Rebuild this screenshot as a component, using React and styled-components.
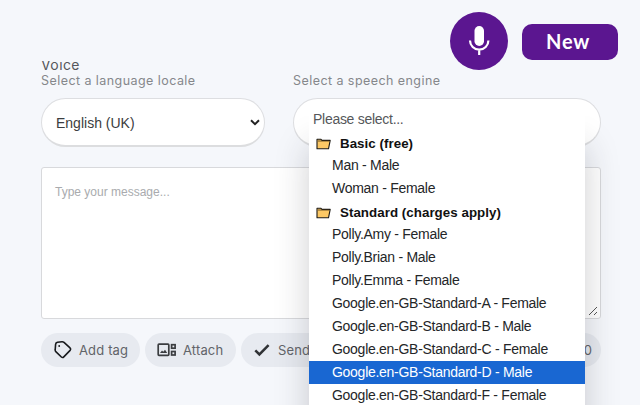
import React from "react";
import styled, { createGlobalStyle } from "styled-components";

const Global = createGlobalStyle`
  * { box-sizing: border-box; }
  html, body { margin: 0; background: #f5f7fb; overflow: hidden; }
`;

const Page = styled.main`
  position: relative;
  width: 640px;
  height: 405px;
  overflow: hidden;
  background: #f5f7fb;
  font-family: Inter, "Open Sans", sans-serif;
`;

const Header = styled.header`
  display: flex;
  justify-content: flex-end;
  align-items: center;
  gap: 14px;
  height: 61px;
  padding: 21px 22px 0 0;
`;

const MicButton = styled.button`
  display: grid;
  place-items: center;
  flex: none;
  width: 58px;
  height: 58px;
  padding: 0;
  border: 0;
  border-radius: 50%;
  background: #5b1690;
`;

const NewButton = styled.button`
  width: 96px;
  height: 36px;
  padding: 0 4px 2px 0;
  margin-top: 2px;
  border: 0;
  border-radius: 10px;
  background: #5b1690;
  color: #fff;
  font: 700 20px/34px Lato, sans-serif;
  letter-spacing: 0.7px;
`;

const Content = styled.section`
  width: 560px;
  margin-left: 41px;
`;

const TitleClip = styled.div`
  display: flex;
  align-items: flex-end;
  height: 11px;
  overflow: hidden;
`;

const Title = styled.h2`
  margin: 0;
  color: #55575b;
  font-size: 14px;
  font-weight: 400;
  line-height: 14px;
  letter-spacing: 0.4px;
`;

const Fields = styled.div`
  display: grid;
  grid-template-columns: 224px 308px;
  justify-content: space-between;
`;

const Label = styled.div`
  height: 26px;
  padding-top: 1px;
  color: #85878b;
  font-size: 12.5px;
  line-height: 16px;
  letter-spacing: 0.44px;
  white-space: nowrap;
`;

const SelectBox = styled.div`
  display: flex;
  align-items: center;
  justify-content: space-between;
  height: 49px;
  padding: 1px 4px 0 14px;
  border: 1px solid #dddee1;
  border-bottom: 2px solid #dcdddf;
  border-radius: 25px;
  background: #fff;
  color: #3b3d40;
  font: 14px "Liberation Sans", Arial, sans-serif;
`;

const Message = styled.div`
  display: flex;
  justify-content: space-between;
  height: 152px;
  margin-top: 20px;
  padding: 17px 1px 1px 13px;
  border: 1px solid #d8d9dc;
  border-radius: 3px;
  background: #fff;
  color: #a9abae;
  font: 12px/15px "Liberation Sans", Arial, sans-serif;
`;

const Grip = styled.svg`
  align-self: flex-end;
`;

const Actions = styled.div`
  display: flex;
  gap: 5px;
  margin-top: 14px;
`;

const Pill = styled.button`
  display: flex;
  align-items: center;
  flex: none;
  width: ${(p) => p.$width};
  height: 34px;
  padding: 0 ${(p) => p.$end || "0"} 0 12px;
  margin-left: ${(p) => (p.$end ? "auto" : "0")};
  justify-content: ${(p) => (p.$end ? "flex-end" : "flex-start")};
  gap: ${(p) => p.$gap || "0"};
  border: 0;
  border-radius: 17px;
  background: #e7eaf0;
  color: #626469;
  font: 13px Inter, sans-serif;
  letter-spacing: 0.15px;
  white-space: nowrap;
`;

const Menu = styled.div`
  position: absolute;
  left: 309px;
  top: 108px;
  width: 276px;
  height: 310px;
  background: #fff;
  box-shadow: 0 38px 32px rgba(35, 38, 45, 0.22);
  color: #242628;
  font: 14px/23px "Liberation Sans", Arial, sans-serif;
`;

const Option = styled.div`
  height: 23px;
  padding-left: ${(p) => (p.$top ? "4px" : "23px")};
  background: ${(p) => (p.$selected ? "#1967d2" : "transparent")};
  color: ${(p) => (p.$selected ? "#fff" : p.$top ? "#55575a" : "inherit")};
  letter-spacing: -0.28px;
  white-space: nowrap;
`;

const Group = styled.div`
  display: flex;
  align-items: center;
  gap: 9px;
  height: 23px;
  padding: 2px 0 0 7px;
  color: #111;
  font-size: 13.333px;
  font-weight: 700;
  letter-spacing: 0.04px;
`;

const MicIcon = () => (
  <svg width="22" height="32" viewBox="0 0 22 32" fill="none" stroke="#fff">
    <rect x="6.5" y="1" width="9.5" height="20" rx="4.75" fill="#fff" stroke="none" />
    <path d="M2 15.5a9.2 9.2 0 0 0 18.4 0M11.2 24.5v5.5" strokeWidth="2.2" />
  </svg>
);

const FolderIcon = () => (
  <svg width="15" height="12" viewBox="0 0 15 12" stroke="#1c1a16" strokeWidth="1.1" strokeLinejoin="round">
    <path d="M1 10.8V1.3h4l1 1.1h8.2L12.5 10.8Z" fill="#fcc865" />
    <path d="M2 3h11" stroke="#4a3514" strokeWidth="0.8" />
  </svg>
);

const TagIcon = () => (
  <svg width="20" height="20" viewBox="0 0 20 20" fill="none" stroke="#17191c" strokeWidth="1.6" strokeLinejoin="round">
    <path d="M4.5 2.3 9 1.8q1.1-.1 2 .6l6 5.5q1.3 1.2.1 2.5l-6.3 6.5q-1.2 1.2-2.4.1L2.8 11.6q-.8-.8-.6-1.9l.4-5.4q.2-1.7 1.9-2Z" />
    <circle cx="6.2" cy="6" r="0.9" fill="#17191c" stroke="none" />
  </svg>
);

const AttachIcon = () => (
  <svg width="20" height="14" viewBox="0 0 20 14" fill="none" stroke="#3b3d40" strokeWidth="1.7">
    <rect x="1.2" y="1.2" width="10.6" height="11.2" rx="0.8" />
    <path d="m3 10 2-2.5 1.3 1.3L8 6.8l2.2 3.2Z" fill="#3b3d40" stroke="none" />
    <rect x="14.6" y="1.7" width="3.5" height="3.5" />
    <rect x="14.6" y="8.5" width="3.5" height="3.5" />
  </svg>
);

const CheckIcon = () => (
  <svg width="18" height="14" viewBox="0 0 18 14" fill="none" stroke="#303235" strokeWidth="2.5">
    <path d="m2.3 7.3 4.1 4.1L15.6 2.2" />
  </svg>
);

const Chevron = () => (
  <svg width="10" height="7" viewBox="0 0 10 7" fill="none" stroke="#222" strokeWidth="2">
    <path d="m1 1.3 4 3.8 4-3.8" />
  </svg>
);

const voices = [
  "Polly.Amy - Female",
  "Polly.Brian - Male",
  "Polly.Emma - Female",
  "Google.en-GB-Standard-A - Female",
  "Google.en-GB-Standard-B - Male",
  "Google.en-GB-Standard-C - Female",
  "Google.en-GB-Standard-D - Male",
  "Google.en-GB-Standard-F - Female",
];

export default function App() {
  return (
    <Page>
      <Global />
      <Header>
        <MicButton aria-label="Record"><MicIcon /></MicButton>
        <NewButton>New</NewButton>
      </Header>
      <Content>
        <TitleClip><Title>Voice</Title></TitleClip>
        <Fields>
          <div>
            <Label>Select a language locale</Label>
            <SelectBox>English (UK)<Chevron /></SelectBox>
          </div>
          <div>
            <Label>Select a speech engine</Label>
            <SelectBox />
          </div>
        </Fields>
        <Message>
          Type your message...
          <Grip width="11" height="11" viewBox="0 0 11 11" stroke="#555" strokeWidth="1"><path d="m1 9 8-8M6 9l3-3" /></Grip>
        </Message>
        <Actions>
          <Pill $width="99px" $gap="6px"><TagIcon />Add tag</Pill>
          <Pill $width="91px" $gap="6px"><AttachIcon />Attach</Pill>
          <Pill $width="100px" $gap="7px"><CheckIcon />Send</Pill>
          <Pill $width="60px" $end="9px">0</Pill>
        </Actions>
      </Content>
      <Menu>
        <Option $top>Please select...</Option>
        <Group><FolderIcon />Basic (free)</Group>
        <Option>Man - Male</Option>
        <Option>Woman - Female</Option>
        <Group><FolderIcon />Standard (charges apply)</Group>
        {voices.map((v) => (
          <Option key={v} $selected={v.includes("-D ")}>{v}</Option>
        ))}
      </Menu>
    </Page>
  );
}
